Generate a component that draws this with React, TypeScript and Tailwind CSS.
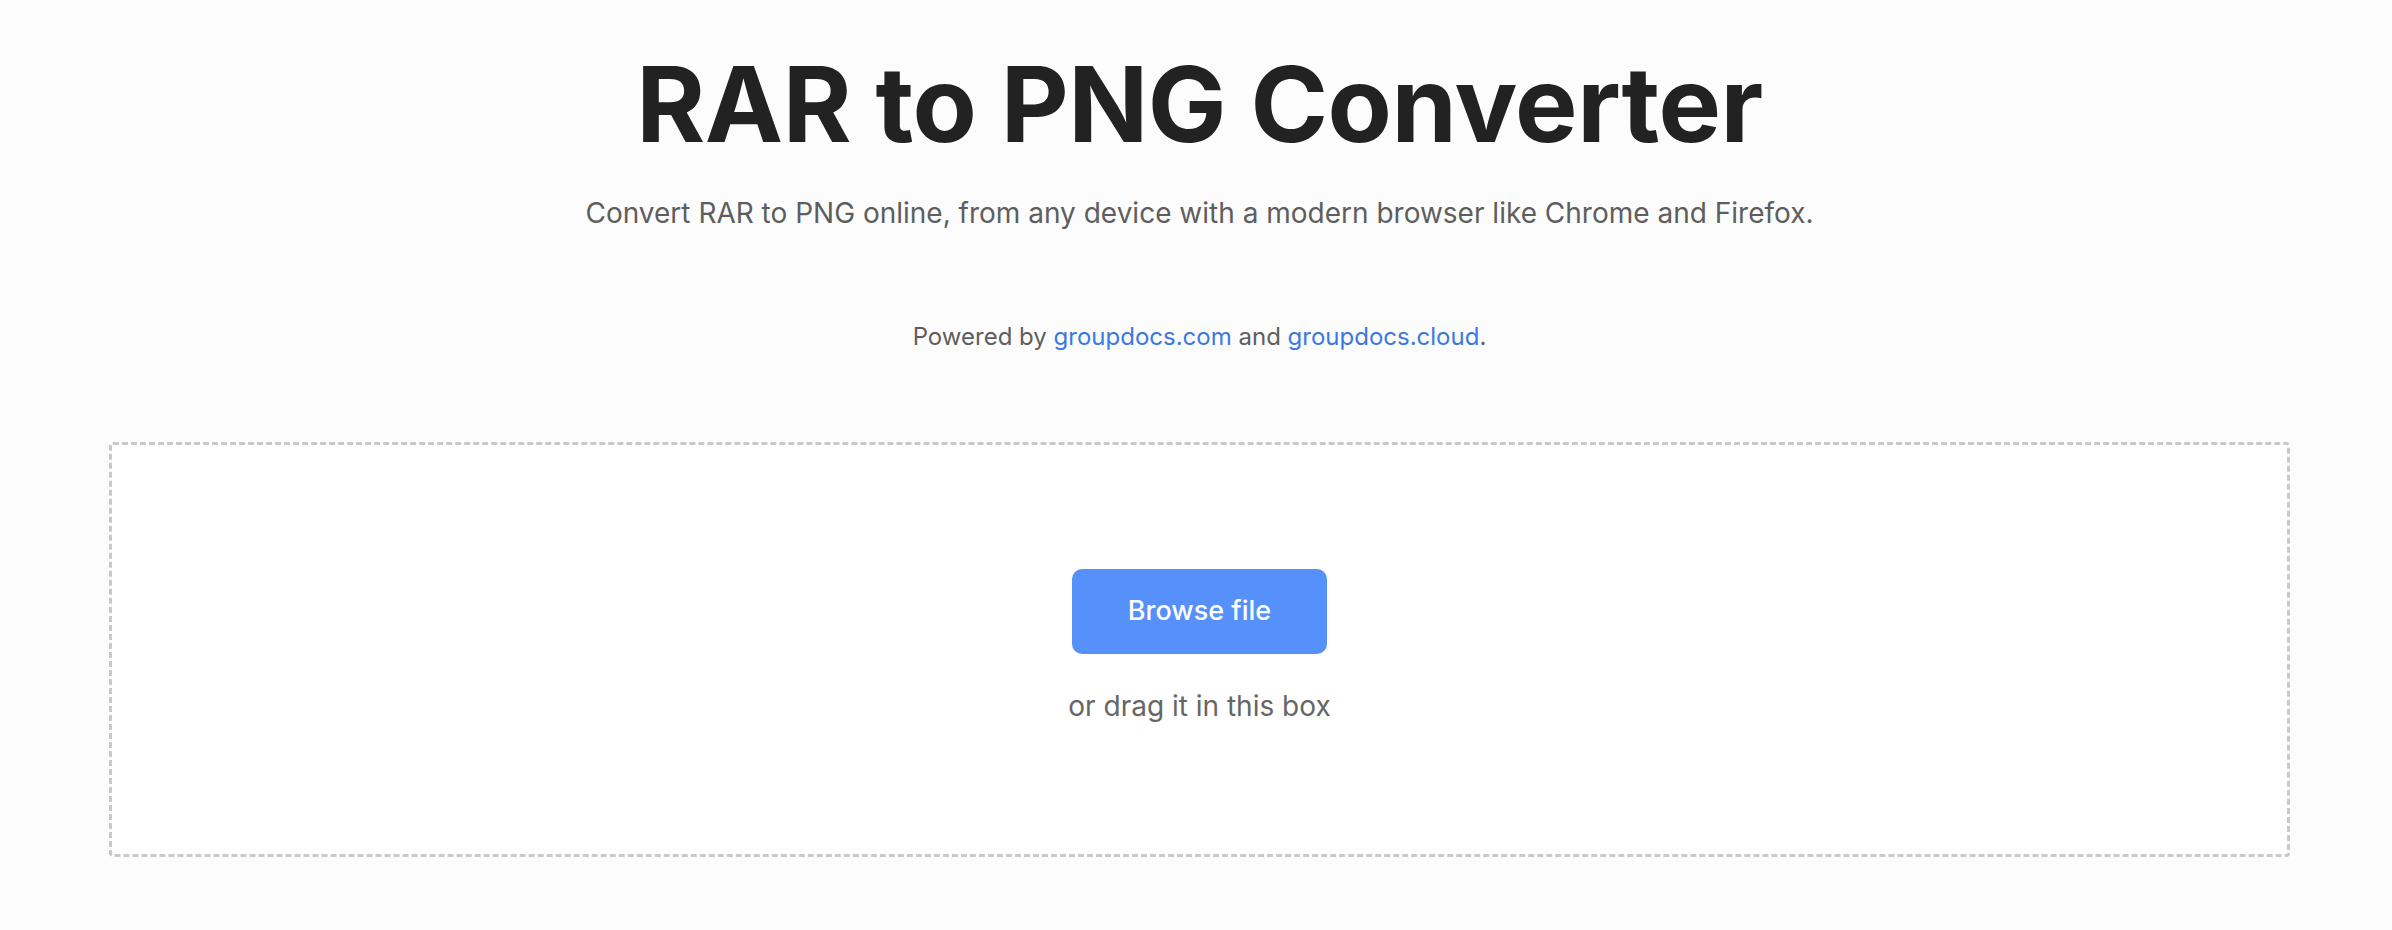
export default function App() {
  return (
    <div className="min-h-[930px] w-full bg-[#fcfcfc] font-['Inter','Liberation_Sans',sans-serif]">
      <div className="flex flex-col items-center pl-[109px] pr-[102px]">
        <h1 className="mt-[39px] text-[105px] font-bold leading-[130px] tracking-[-0.5px] text-[#222222]">
          RAR to PNG Converter
        </h1>
        <p className="mt-[24px] text-[28px] leading-[40px] text-[#5e5e5e]">
          Convert RAR to PNG online, from any device with a modern browser like Chrome and Firefox.
        </p>
        <p className="mt-[86px] text-[24px] leading-[36px] text-[#5e5e5e]">
          Powered by{" "}
          <a href="#" className="text-[#3b78e0]">
            groupdocs.com
          </a>{" "}
          and{" "}
          <a href="#" className="text-[#3b78e0]">
            groupdocs.cloud
          </a>
          .
        </p>
        <div className="mt-[87px] flex h-[415px] w-full flex-col items-center justify-center rounded-[4px] border-[3px] border-dashed border-[#c9c9c9] bg-white pb-[4px]">
          <button className="h-[85px] w-[255px] rounded-[10px] bg-[#5590fb] text-[27px] font-medium text-white">
            Browse file
          </button>
          <p className="mt-[32px] text-[28px] leading-[40px] text-[#666666]">
            or drag it in this box
          </p>
        </div>
      </div>
    </div>
  );
}
